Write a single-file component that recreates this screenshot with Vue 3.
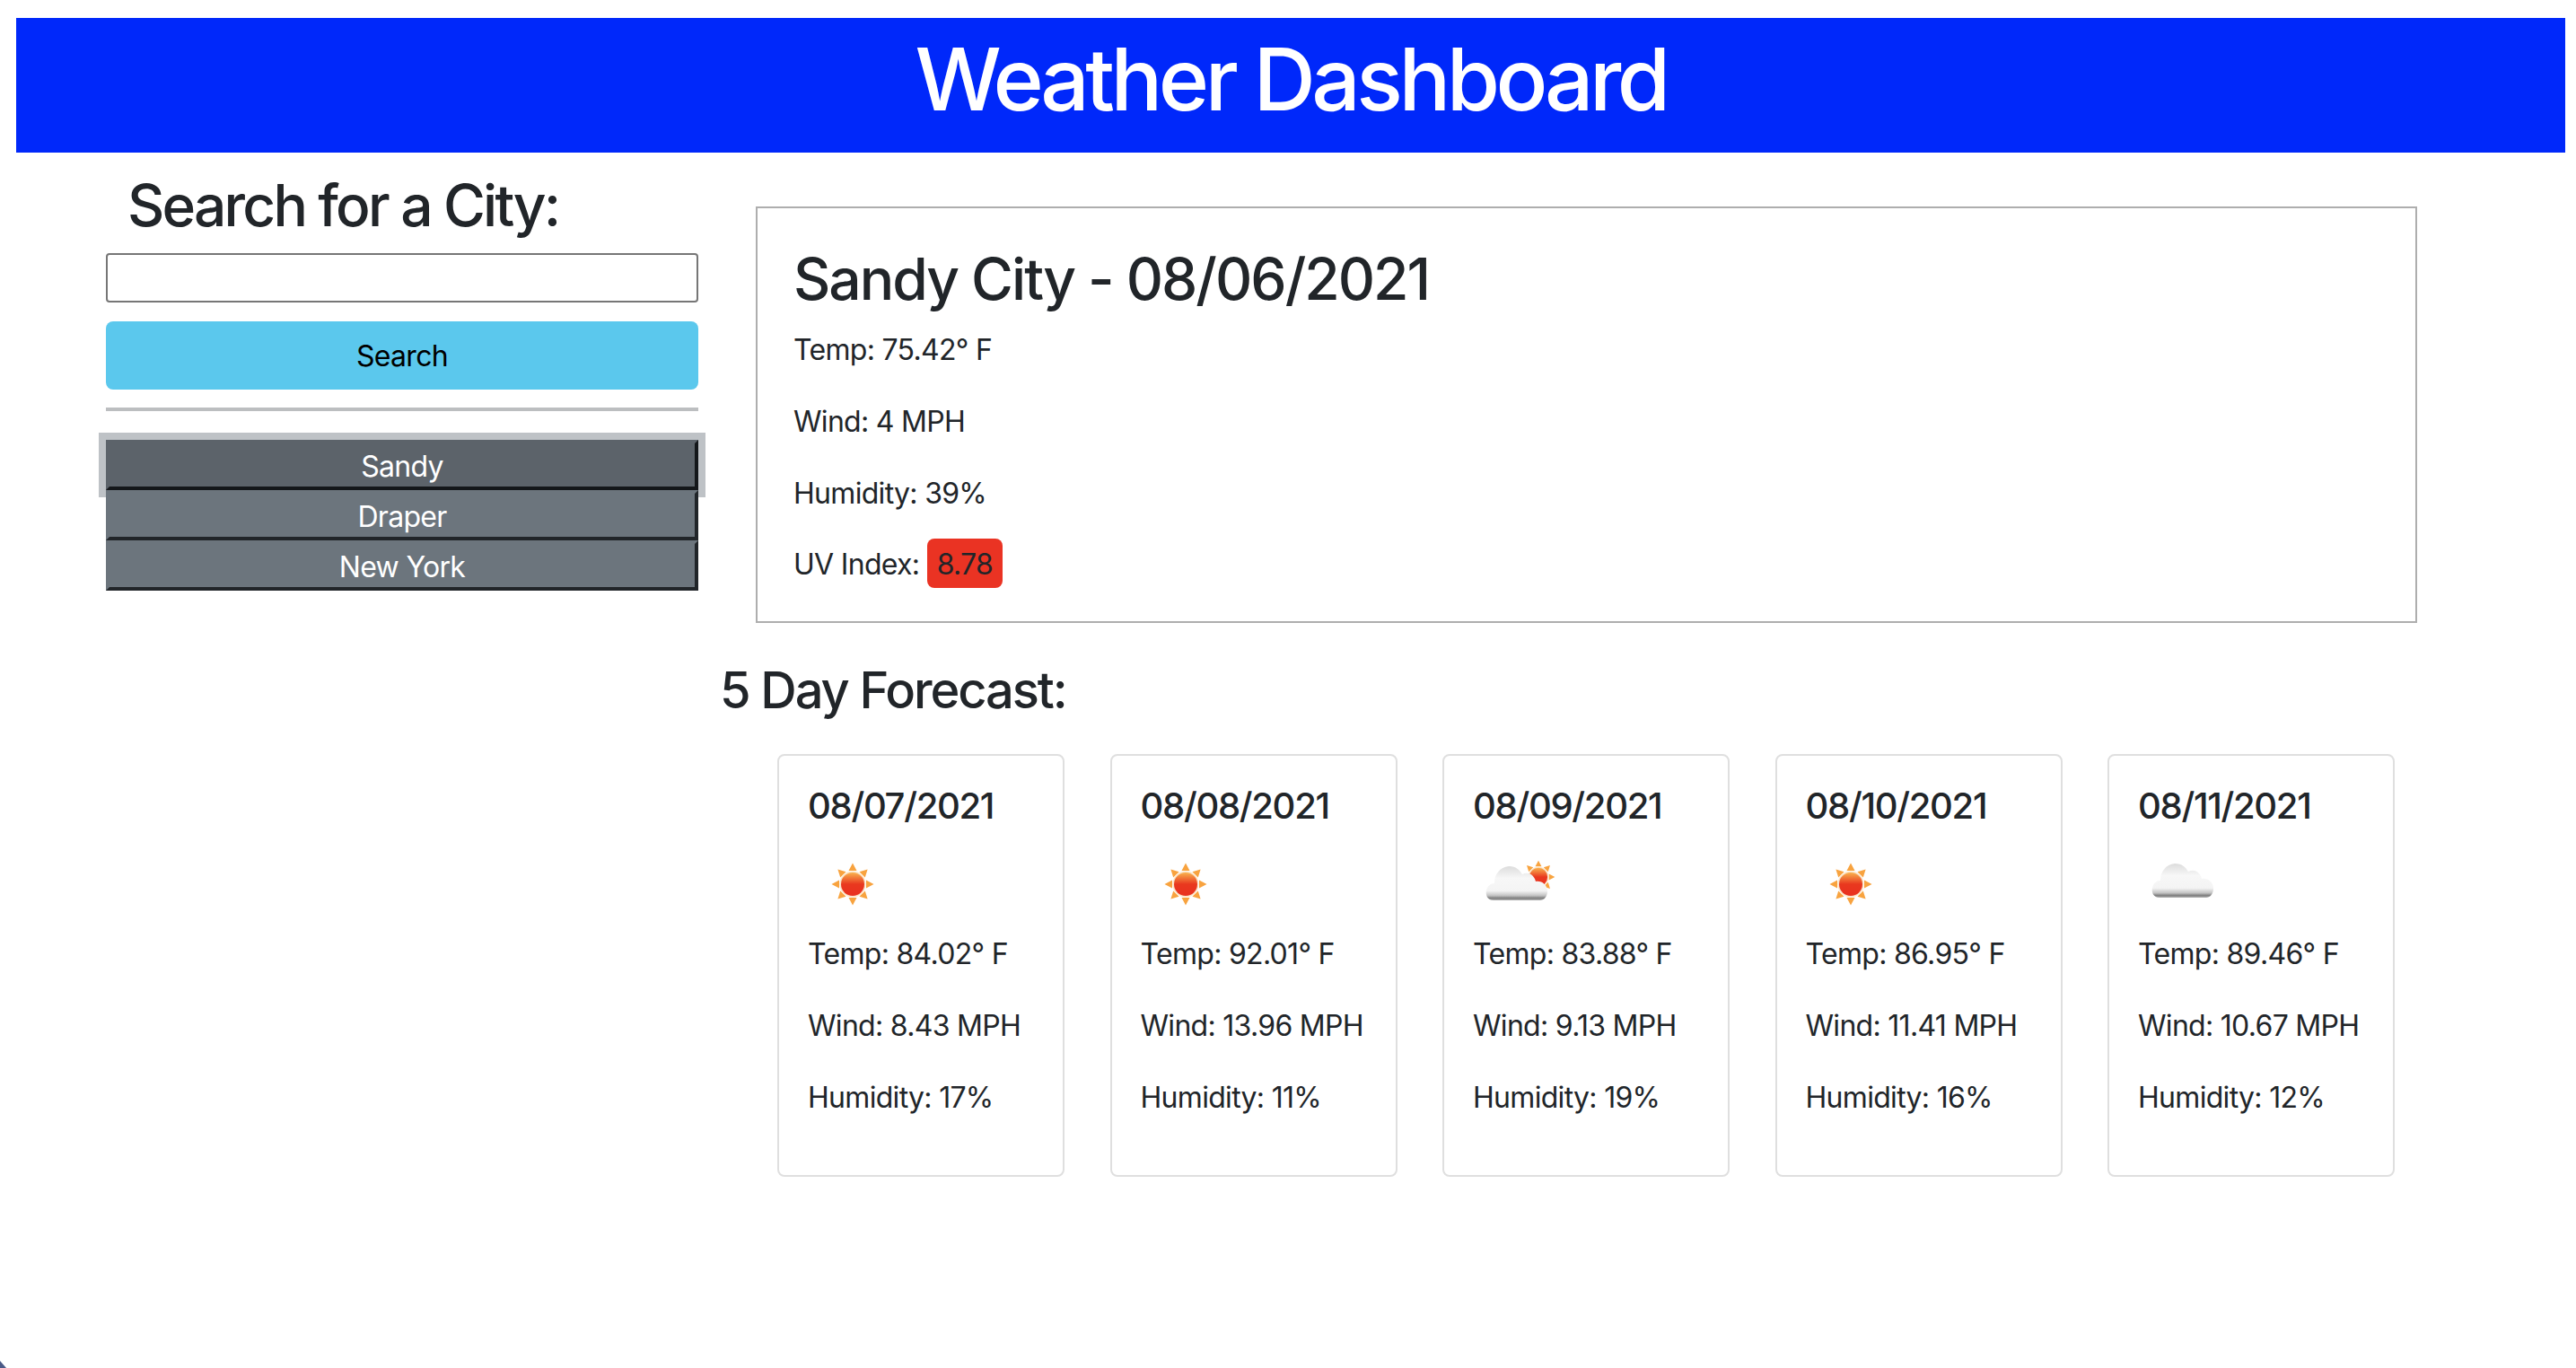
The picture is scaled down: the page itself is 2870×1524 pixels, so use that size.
<template>
  <div class="page">
    <header class="top-bar">
      <h1>Weather Dashboard</h1>
    </header>

    <svg class="defs" width="0" height="0">
      <defs>
        <linearGradient id="sunFill" x1="0" y1="0" x2="0" y2="1">
          <stop offset="0" stop-color="#f9b24e" />
          <stop offset="0.5" stop-color="#e9381f" />
          <stop offset="1" stop-color="#e9301f" />
        </linearGradient>
        <linearGradient id="cloudFill" x1="0" y1="0" x2="0" y2="1">
          <stop offset="0" stop-color="#dcdcdc" />
          <stop offset="0.35" stop-color="#f7f7f7" />
          <stop offset="0.72" stop-color="#f4f4f4" />
          <stop offset="0.86" stop-color="#c4c4c4" />
          <stop offset="0.94" stop-color="#7d7d7d" />
          <stop offset="1" stop-color="#b5b5b5" />
        </linearGradient>
      </defs>
    </svg>

    <main class="content">
      <aside class="sidebar">
        <h2 class="search-title">Search for a City:</h2>
        <input class="search-input" type="text" />
        <button class="search-btn">Search</button>
        <hr class="divider" />
        <div class="city-list">
          <button
            v-for="city in cities"
            :key="city"
            class="city-btn"
            :class="{ active: city === 'Sandy' }"
          >
            {{ city }}
          </button>
        </div>
      </aside>

      <section class="results">
        <div class="current">
          <h2 class="current-title">Sandy City - 08/06/2021</h2>
          <p>Temp: 75.42° F</p>
          <p>Wind: 4 MPH</p>
          <p>Humidity: 39%</p>
          <p class="uv-row">UV Index: <span class="uv">8.78</span></p>
        </div>

        <h3 class="forecast-title">5 Day Forecast:</h3>

        <div class="forecast">
          <div v-for="day in days" :key="day.date" class="day-card">
            <h5>{{ day.date }}</h5>
            <svg class="icon" viewBox="0 0 100 100">
              <g v-if="day.icon !== 'cloud'" :transform="day.icon === 'partly' ? 'translate(73 42) scale(0.78)' : 'translate(50 50)'">
                <polygon
                  v-for="a in rays"
                  :key="a"
                  points="-4.5,-15 0,-23.5 4.5,-15"
                  fill="#f8a33f"
                  :transform="`rotate(${a})`"
                />
                <circle r="14.5" fill="#fbe3c4" />
                <circle r="13" fill="url(#sunFill)" />
              </g>
              <path
                v-if="day.icon !== 'sun'"
                :transform="day.icon === 'partly' ? 'translate(-1 3)' : ''"
                fill="url(#cloudFill)"
                d="M24 65 C17 65 15 59 16 54 C17 49 21 46 25 46 C25 36 31 28 41 27 C49 27 53 31 56 36 C62 33 69 36 71 44 C78 43 84 48 84 55 C84 61 80 65 76 65 Z"
              />
            </svg>
            <p>Temp: {{ day.temp }}° F</p>
            <p>Wind: {{ day.wind }} MPH</p>
            <p>Humidity: {{ day.humidity }}%</p>
          </div>
        </div>
      </section>
    </main>

    <div class="window-corner"></div>
  </div>
</template>

<script setup>
const cities = ['Sandy', 'Draper', 'New York']
const rays = [0, 45, 90, 135, 180, 225, 270, 315]

const days = [
  { date: '08/07/2021', icon: 'sun', temp: '84.02', wind: '8.43', humidity: 17 },
  { date: '08/08/2021', icon: 'sun', temp: '92.01', wind: '13.96', humidity: 11 },
  { date: '08/09/2021', icon: 'partly', temp: '83.88', wind: '9.13', humidity: 19 },
  { date: '08/10/2021', icon: 'sun', temp: '86.95', wind: '11.41', humidity: 16 },
  { date: '08/11/2021', icon: 'cloud', temp: '89.46', wind: '10.67', humidity: 12 }
]
</script>

<style>
html,
body {
  background: #fff;
}
</style>

<style scoped>
.page {
  position: relative;
  height: 1524px;
  overflow: hidden;
  padding-top: 20px;
  box-sizing: border-box;
  font-family: Inter, "Liberation Sans", sans-serif;
  font-size: 32px;
  line-height: 48px;
  color: #212529;
  letter-spacing: -0.7px;
}

.top-bar {
  margin: 0 12px 0 18px;
  height: 150px;
  padding-bottom: 13px;
  box-sizing: border-box;
  background: #0028fa;
  color: #fff;
  display: flex;
  align-items: center;
  justify-content: center;
}

.top-bar h1 {
  margin: 0;
  font-size: 96px;
  font-weight: 500;
  line-height: 1.2;
  letter-spacing: -4.5px;
}

.defs {
  position: absolute;
}

.content {
  display: flex;
  padding-left: 118px;
}

.sidebar {
  width: 660px;
  margin-right: 24px;
  display: flex;
  flex-direction: column;
  padding-top: 20px;
}

.search-title {
  margin: 0 0 15px;
  padding-left: 24px;
  font-size: 64px;
  font-weight: 500;
  line-height: 77px;
  letter-spacing: -2.8px;
}

.search-input {
  height: 55px;
  box-sizing: border-box;
  border: 2px solid #767676;
  border-radius: 4px;
  background: #fff;
}

.search-btn {
  height: 76px;
  margin-top: 21px;
  padding: 2px 0 0;
  border: none;
  border-radius: 8px;
  background: #5bc8ed;
  color: #000;
  font: inherit;
  letter-spacing: inherit;
}

.divider {
  height: 4px;
  margin: 20px 0 32px;
  border: none;
  background: #bcbec0;
}

.city-list {
  display: flex;
  flex-direction: column;
}

.city-btn {
  position: relative;
  height: 56px;
  box-sizing: border-box;
  padding: 2px 0 0;
  border-style: solid;
  border-width: 4px;
  border-color: #6c757d #212529 #212529 #6c757d;
  background: #6c757d;
  color: #fff;
  font: inherit;
  letter-spacing: inherit;
}

.city-btn.active {
  background: #5c636a;
  border-color: #5c636a #14171a #14171a #5c636a;
  box-shadow: 0 0 0 8px #bec2c6;
}

.results {
  flex: 0 0 auto;
}

.current {
  width: 1851px;
  height: 464px;
  box-sizing: border-box;
  margin: 60px 0 0 40px;
  padding: 40px 40px 0;
  border: 2px solid #aeaeae;
}

.current p,
.day-card p {
  margin: 0 0 32px;
}

.current-title {
  margin: 0 0 17px;
  font-size: 64px;
  font-weight: 500;
  line-height: 77px;
  letter-spacing: -2px;
}

.current .uv-row {
  margin-top: -1px;
}

.uv {
  padding: 9px 11px 7px;
  border-radius: 8px;
  background: #ea3323;
}

.forecast-title {
  margin: 42px 0 37px;
  font-size: 56px;
  font-weight: 500;
  line-height: 67px;
  letter-spacing: -2.1px;
}

.forecast {
  display: flex;
  gap: 50.5px;
  margin-left: 64px;
}

.day-card {
  width: 320px;
  height: 471px;
  box-sizing: border-box;
  padding: 32px;
  border: 2px solid #dfdfdf;
  border-radius: 8px;
}

.day-card h5 {
  margin: 0 0 13px;
  font-size: 40px;
  font-weight: 500;
  line-height: 48px;
  letter-spacing: -1.3px;
}

.icon {
  display: block;
  width: 100px;
  height: 100px;
  margin-bottom: 4px;
  filter: blur(0.7px);
}

.window-corner {
  position: absolute;
  left: 0;
  bottom: 0;
  width: 7px;
  height: 8px;
  background: #4b5a87;
  clip-path: polygon(0 0, 100% 100%, 0 100%);
}
</style>
